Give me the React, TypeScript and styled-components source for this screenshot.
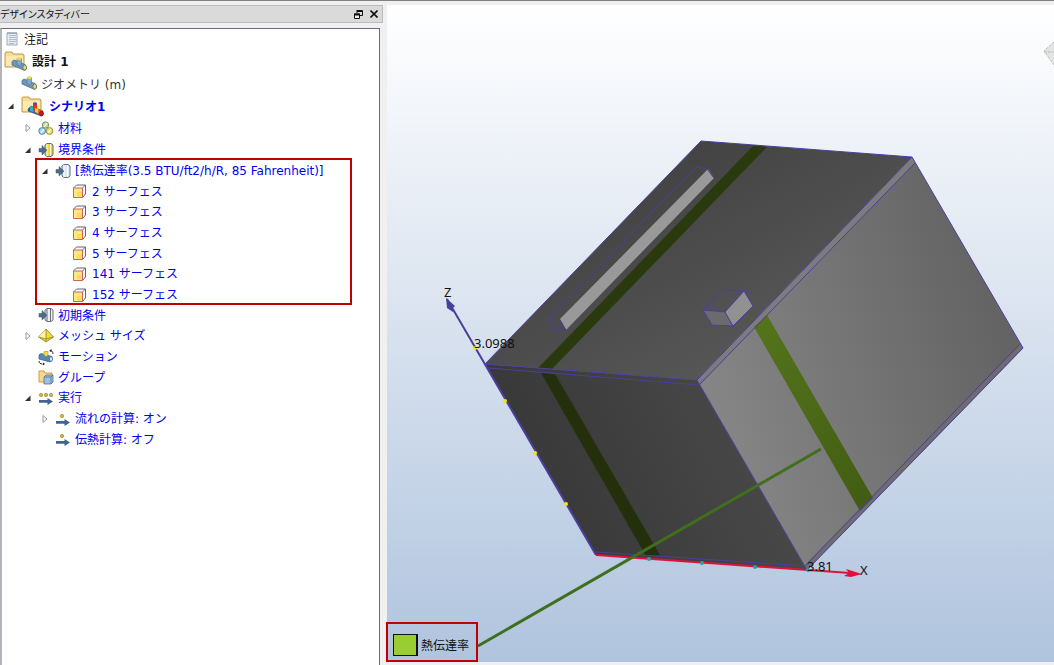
import React, { useState } from "react";
import styled, { createGlobalStyle } from "styled-components";

const GlobalStyle = createGlobalStyle`
  * { box-sizing: border-box; }
  body { margin: 0; background: #f0f0f0; }
  button { border: 0; padding: 0; background: none; color: inherit; font: inherit; }
`;

const uiFont = `"DejaVu Sans", "Noto Sans CJK JP", sans-serif`;

const Window = styled.div`
  display: flex;
  min-height: 100vh;
  padding-top: 4px;
  border-top: 1px solid #808080;
  background: #f0f0f0;
  overflow: hidden;
`;

const Panel = styled.aside`
  display: flex;
  flex-direction: column;
  flex: 0 0 383px;
  gap: 5px;
`;

const TitleBar = styled.header`
  display: flex;
  align-items: center;
  height: 18px;
  background: #dadada;
  border: 1px solid #bcbcbc;
  border-left: 0;
`;

const Title = styled.h1`
  flex: 1;
  margin: 0;
  font: 400 10px/16px "Noto Sans CJK JP", sans-serif;
  font-feature-settings: "palt";
  color: #111;
`;

const TitleButton = styled.button`
  display: flex;
  align-items: center;
  justify-content: center;
  width: 16px;
  height: 16px;
`;

const Tree = styled.ul`
  flex: 1;
  margin: 0 3px 0 0;
  padding: 0;
  list-style: none;
  background: #fff;
  border: solid #6c6c78;
  border-width: 1px 1px 0 0;
  border-left: 2px solid #b4b4bc;
  font-family: ${uiFont};
  font-size: 12px;
`;

const SubTree = styled.ul`
  margin: 0;
  padding: 0;
  list-style: none;
`;

const Marked = styled.li`
  position: relative;
  &::after {
    content: "";
    position: absolute;
    inset: -2px 27px 0 33px;
    border: 2px solid #c00000;
    pointer-events: none;
  }
`;

const Row = styled.div<{ $level: number; $height: number; $tone?: string; $bold?: boolean }>`
  display: flex;
  align-items: center;
  height: ${(p) => p.$height}px;
  padding-left: ${(p) => (p.$level ? p.$level * 17 - 14 : 2)}px;
  color: ${(p) => p.$tone ?? "#0000f0"};
  font-weight: ${(p) => (p.$bold ? 700 : 400)};
  white-space: nowrap;
`;

const Label = styled.span`
  padding-bottom: 2px;
`;

const Twisty = styled.button`
  display: flex;
  align-items: center;
  justify-content: center;
  width: 16px;
  height: 16px;
  padding-right: 4px;
`;

const TwistySpace = styled.span`
  width: 16px;
`;

const IconCell = styled.span<{ $large?: boolean }>`
  display: flex;
  width: ${(p) => (p.$large ? 24 : 16)}px;
  margin-right: 4px;
`;

const Viewport = styled.main`
  position: relative;
  flex: 1;
  margin: 0 0 3px 4px;
  background: linear-gradient(#fff, #b0c4de);
`;

const Scene = styled.svg`
  position: absolute;
  inset: 0;
  width: 100%;
  height: 100%;
  font: 13px "Noto Sans", sans-serif;
`;

const Legend = styled.div`
  position: absolute;
  left: -1px;
  bottom: 0;
  display: flex;
  align-items: center;
  gap: 3px;
  height: 40px;
  padding: 5px 7px 0 5px;
  border: 2px solid #c00000;
  font: 12px/16px "Noto Sans CJK JP", sans-serif;
  color: #111;
`;

const Swatch = styled.span`
  width: 25px;
  height: 22px;
  background: #9acd32;
  border: 1px solid #111;
  border-right-width: 2px;
`;

type IconName =
  | "note" | "design" | "geometry" | "scenario" | "material" | "boundary" | "flux"
  | "surface" | "initial" | "mesh" | "motion" | "group" | "solve" | "step";

const Pipe = () => (
  <>
    <path d="M1 6.500 3 5l11 4.500 1.500 2.500v2l-2 1.500L1 10Z" fill="#6d96bd" stroke="#47647f" strokeWidth=".7" />
    <path d="M6 3.500h4.500v6l-2 1.500L6 9.500Z" fill="#83a9c9" stroke="#47647f" strokeWidth=".5" />
    <ellipse cx="8.250" cy="3.500" rx="2.300" ry="1.500" fill="#eee04c" />
    <ellipse cx="13.700" cy="12.500" rx="1.800" ry="2.600" fill="#eee04c" stroke="#555" strokeWidth=".6" />
  </>
);

const Folder = () => (
  <>
    <path d="M1 17V3l1-1h6l1 2h10l1 1v12Z" fill="#f6dc94" stroke="#c59a45" />
    <path d="M2 6h17v10H2Z" fill="#fbe9b4" />
  </>
);

const InArrow = () => (
  <path d="M1 6.500h3V3.500l5 4.700-5 4.700V10H1Z" fill="#4d6c8a" stroke="#3d566e" strokeWidth=".5" />
);

const Disc = ({ fill, bars }: { fill: string; bars?: boolean }) => (
  <>
    <path d="M7 3 9 1.500h4L15 3v10l-2 1.500H9L7 13Z" fill={fill} stroke="#555f6a" strokeWidth=".9" />
    <path d="M9 2v12M12.500 2v12" stroke={bars ? "#555f6a" : "#fff"} strokeWidth=".9" />
  </>
);

function Icon({ name }: { name: IconName }) {
  if (name === "design" || name === "scenario") {
    return (
      <svg width="24" height="22" viewBox="0 0 24 22" aria-hidden="true">
        <Folder />
        {name === "design" ? (
          <g transform="translate(7 5)"><Pipe /></g>
        ) : (
          <g>
            <path d="m7 14 3-3 12 5v4l-2 1L7 16Z" fill="#2c59c8" stroke="#444" strokeWidth=".5" />
            <path d="m9 11 4 1v5l-4-1Z" fill="#25b4cb" />
            <path d="M12 8h4v6l-2 2-2-1Z" fill="#e63118" />
            <path d="m14 13 4 1v5l-4-2Z" fill="#efd025" />
            <path d="m17 14 4 1v6l-4-2Z" fill="#df6d17" />
            <ellipse cx="14" cy="8.500" rx="2" ry="1.200" fill="#3f55b5" />
            <ellipse cx="20.500" cy="18.500" rx="2" ry="2.500" fill="#c81713" stroke="#611" strokeWidth=".6" />
          </g>
        )}
      </svg>
    );
  }
  return (
    <svg width="16" height="16" viewBox="0 0 16 16" aria-hidden="true">
      {name === "note" && (
        <>
          <path d="M3 2h10v12H3Z" fill="#e4ebf2" stroke="#8b99a7" strokeWidth=".8" />
          <path d="M5 4.500h7M5 6.500h7M5 8.500h7M5 10.500h7M5 12.500h5" stroke="#a3b1bf" strokeWidth=".8" />
          <path d="M4 1v2M6 1v2M8 1v2M10 1v2M12 1v2" stroke="#77858f" strokeWidth=".8" />
        </>
      )}
      {name === "geometry" && <g transform="translate(0 -2)"><Pipe /></g>}
      {name === "material" && (
        <>
          <circle cx="7.500" cy="5" r="3.200" fill="#c3d79b" stroke="#7c8f6c" />
          <circle cx="4.200" cy="11" r="3.400" fill="#a8d3ee" stroke="#4b86a9" />
          <circle cx="11.500" cy="11" r="3.400" fill="#e4e265" stroke="#929533" />
          <path d="m6 7 3-4M3 13l3-4M10 13l3-4" stroke="#fff" strokeWidth="1.200" />
        </>
      )}
      {name === "boundary" && <><Disc fill="#f3d535" /><InArrow /></>}
      {name === "flux" && <><Disc fill="#dce7f0" /><InArrow /></>}
      {name === "initial" && <><Disc fill="#eef2f5" bars /><InArrow /></>}
      {name === "surface" && (
        <>
          <path d="m1.500 5 3-3h9v9l-3 3.500" fill="#fff" stroke="#5d6772" />
          <path d="M10.500 5 13.500 2" stroke="#5d6772" />
          <path d="M1.500 5h9v9.500h-9Z" fill="#fde886" stroke="#d0605a" />
          <path d="M5 9h4.500v4.500H5Z" fill="#fbdc55" />
        </>
      )}
      {name === "mesh" && (
        <>
          <path d="m8 1 7.500 8L8 14 .5 9Z" fill="#f2dc31" stroke="#87802a" strokeWidth=".8" />
          <path d="M8 1 .5 9 8 11Z" fill="#fbf3a0" />
          <path d="M8 1v13M.5 9 8 11l7.500-2" stroke="#8a8434" strokeWidth=".8" fill="none" />
        </>
      )}
      {name === "motion" && (
        <>
          <path d="M1 6 3 4.500l11 3v4L12 13 1 10Z" fill="#5289bd" stroke="#38597a" strokeWidth=".7" />
          <path d="M6 2.500h4v4L8 7.500l-2-1Z" fill="#f0df46" stroke="#8b812b" strokeWidth=".5" />
          <ellipse cx="13" cy="10" rx="1.600" ry="2.300" fill="#d7e4ed" stroke="#38597a" strokeWidth=".6" />
          <path d="M12 1.500c2 0 3 1.500 3 3.500M1 12c0 2 1.500 3 3.500 3" stroke="#222" fill="none" />
          <path d="m11 2 2.500-2v3ZM5 13.500v3L7 15Z" fill="#222" />
        </>
      )}
      {name === "group" && (
        <>
          <path d="M1 13V2h5l1 2h7v9Z" fill="#f7d98e" stroke="#d09b43" />
          <path d="m6 8 2-2h7v7l-2 2H6Z" fill="#9fc0df" stroke="#4e7498" strokeWidth=".8" />
          <path d="M6 8h7v7M13 8l2-2" stroke="#4e7498" strokeWidth=".8" fill="none" />
        </>
      )}
      {(name === "solve" || name === "step") && (
        <>
          {(name === "solve" ? [3, 8, 13] : [7]).map((x) => (
            <circle key={x} cx={x} cy="5" r="1.700" fill="#d2b82f" stroke="#7d7220" strokeWidth=".5" />
          ))}
          <path d="M1 10h8.500V8l5.500 3.500L9.500 15v-2.300H1Z" fill="#40658a" />
        </>
      )}
    </svg>
  );
}

interface RowProps {
  level: number;
  icon: IconName;
  text: string;
  height?: number;
  tone?: string;
  bold?: boolean;
  twisty?: "open" | "closed";
}

function TreeRow({ level, icon, text, height = 21, tone, bold, twisty }: RowProps) {
  const [open, setOpen] = useState(twisty === "open");
  return (
    <Row $level={level} $height={height} $tone={tone} $bold={bold}>
      {twisty ? (
        <Twisty aria-label={text} aria-expanded={open} onClick={() => setOpen(!open)}>
          <svg width="8" height="8" viewBox="0 0 8 8" aria-hidden="true">
            {open ? (
              <path d="M6.500 1.500v5.500H1Z" fill="#333" />
            ) : (
              <path d="M2 .5v7L6 4Z" fill="#fff" stroke="#999" />
            )}
          </svg>
        </Twisty>
      ) : (
        level > 0 && <TwistySpace />
      )}
      <IconCell $large={icon === "design" || icon === "scenario"}>
        <Icon name={icon} />
      </IconCell>
      <Label>{text}</Label>
    </Row>
  );
}

const surfaces = [
  { id: 2, height: 20 },
  { id: 3, height: 21 },
  { id: 4, height: 21 },
  { id: 5, height: 20 },
  { id: 141, height: 21 },
  { id: 152, height: 21 },
];

const edge = "#4a3f9c";

function Model() {
  return (
    <Scene viewBox="387 5 667 657" preserveAspectRatio="xMinYMin meet" role="img" aria-label="3D">
      <defs>
        <linearGradient id="top" gradientUnits="userSpaceOnUse" x1="690" y1="145" x2="790" y2="330">
          <stop offset="0" stopColor="#434343" />
          <stop offset="1" stopColor="#565656" />
        </linearGradient>
        <linearGradient id="front" gradientUnits="userSpaceOnUse" x1="520" y1="500" x2="740" y2="400">
          <stop offset="0" stopColor="#373737" />
          <stop offset="1" stopColor="#484848" />
        </linearGradient>
        <linearGradient id="side" gradientUnits="userSpaceOnUse" x1="720" y1="420" x2="1000" y2="340">
          <stop offset="0" stopColor="#858585" />
          <stop offset="1" stopColor="#646464" />
        </linearGradient>
        <linearGradient id="band" gradientUnits="userSpaceOnUse" x1="760" y1="320" x2="866" y2="505">
          <stop offset="0" stopColor="#54741b" />
          <stop offset="1" stopColor="#425d13" />
        </linearGradient>
      </defs>

      <path d="M701 141 912 157 697 380 485 364Z" fill="url(#top)" />
      <path d="M485 364 697 380 807 570 596 555Z" fill="url(#front)" />
      <path d="M697 380 912 157 1023 348 807 570Z" fill="url(#side)" />
      <path d="M697 380 912 157 915 163 700 385Z" fill="#7c7c7c" />
      <path d="M807 570 1023 348 1020 344 805 565Z" fill="#6c6c72" />

      <path d="M754 145 767 147 552 369 538 368Z" fill="#2b3a0e" />
      <path d="M541 373 555 374 660 555 646 556Z" fill="#24300c" />
      <path d="M754 327 767 315 873 498 860 511Z" fill="url(#band)" />

      <path d="M560 319 708 169 714 178 566 330Z" fill="#999" />
      <path d="M725 312 744 291 753 306 733 326Z" fill="#919191" />
      <path d="M703 310 725 312 733 326 712 325Z" fill="#6b6b6b" />

      <g fill="none" stroke={edge} strokeWidth="1">
        <path d="M485 364 701 141 912 157 1023 348 807 570 697 380 912 157M697 380 485 364 596 555" />
        <path d="M488 368 699 385 915 163M1020 344 805 566 596 552" />
        <path d="M566 330 553 330 548 319 560 320 566 330M548 319 696 167 707 169 714 178" />
        <path d="M723 289 744 291 753 306 733 326 712 325 703 310ZM703 310 725 312 744 291M725 312 733 326" />
      </g>

      <path d="M596 555 447 299" stroke={edge} strokeWidth="2" />
      <path d="M446 298 455 306 453 308 453 312 447 308Z" fill={edge} />
      <path d="M596 555 850 573" stroke="#e0113a" strokeWidth="2" />
      <path d="M862 574 846 569 849 573 844 576 851 577Z" fill="#e0113a" />

      <g fill="#f3e60d">
        <circle cx="475" cy="348" r="2" />
        <circle cx="505" cy="401" r="2" />
        <circle cx="535" cy="453" r="2" />
        <circle cx="566" cy="504" r="2" />
      </g>
      <g fill="#1fa5ab">
        <circle cx="649" cy="559" r="2" />
        <circle cx="702" cy="563" r="2" />
        <circle cx="755" cy="567" r="2" />
        <circle cx="808" cy="570" r="2" />
      </g>

      <g fill="#111">
        <text x="444" y="297">Z</text>
        <text x="474" y="348">3.0988</text>
        <text x="807" y="571">3.81</text>
        <text x="860" y="575">X</text>
      </g>

      <path d="M478 646 821 449" stroke="#3f6f1c" strokeWidth="3" />
      <path d="M1044 51 1054 42V65Z" fill="#e4e4e4" />
      <path d="M1054 42 1044 51 1054 65M1044 52h10" stroke="#bbb" strokeDasharray="3 1" fill="none" />
    </Scene>
  );
}

export default function App() {
  return (
    <>
      <GlobalStyle />
      <Window>
        <Panel>
          <TitleBar>
            <Title>デザインスタディバー</Title>
            <TitleButton aria-label="フロート">
              <svg width="9" height="9" viewBox="0 0 9 9" aria-hidden="true">
                <path d="M3 .5h5.500v5H6M3 3V0M3 1.500h5.500" fill="none" stroke="#111" />
                <path d="M.5 4h5v4.500h-5Z" fill="#eee" stroke="#111" />
                <path d="M0 4.500h6" stroke="#111" strokeWidth="2" />
              </svg>
            </TitleButton>
            <TitleButton aria-label="閉じる">
              <svg width="8" height="8" viewBox="0 0 8 8" aria-hidden="true">
                <path d="m.5.5 7 7M7.500.5l-7 7" stroke="#111" strokeWidth="1.600" />
              </svg>
            </TitleButton>
          </TitleBar>
          <Tree>
            <li><TreeRow level={0} icon="note" text="注記" height={20} tone="#222" /></li>
            <li><TreeRow level={0} icon="design" text="設計 1" height={24} tone="#111" bold /></li>
            <li><TreeRow level={1} icon="geometry" text="ジオメトリ (m)" height={22} tone="#333" /></li>
            <li>
              <TreeRow level={1} icon="scenario" text="シナリオ1" height={22} bold twisty="open" />
              <SubTree>
                <li><TreeRow level={2} icon="material" text="材料" height={22} twisty="closed" /></li>
                <li><TreeRow level={2} icon="boundary" text="境界条件" twisty="open" /></li>
                <Marked>
                  <TreeRow level={3} icon="flux" text="[熱伝達率(3.5 BTU/ft2/h/R, 85 Fahrenheit)]" twisty="open" />
                  <SubTree>
                    {surfaces.map((s) => (
                      <li key={s.id}>
                        <TreeRow level={4} icon="surface" text={`${s.id} サーフェス`} height={s.height} />
                      </li>
                    ))}
                  </SubTree>
                </Marked>
                <li><TreeRow level={2} icon="initial" text="初期条件" height={20} /></li>
                <li><TreeRow level={2} icon="mesh" text="メッシュ サイズ" twisty="closed" /></li>
                <li><TreeRow level={2} icon="motion" text="モーション" /></li>
                <li><TreeRow level={2} icon="group" text="グループ" height={20} /></li>
                <li>
                  <TreeRow level={2} icon="solve" text="実行" twisty="open" />
                  <SubTree>
                    <li><TreeRow level={3} icon="step" text="流れの計算: オン" twisty="closed" /></li>
                    <li><TreeRow level={3} icon="step" text="伝熱計算: オフ" height={20} /></li>
                  </SubTree>
                </li>
              </SubTree>
            </li>
          </Tree>
        </Panel>
        <Viewport>
          <Model />
          <Legend>
            <Swatch />
            <span>熱伝達率</span>
          </Legend>
        </Viewport>
      </Window>
    </>
  );
}
